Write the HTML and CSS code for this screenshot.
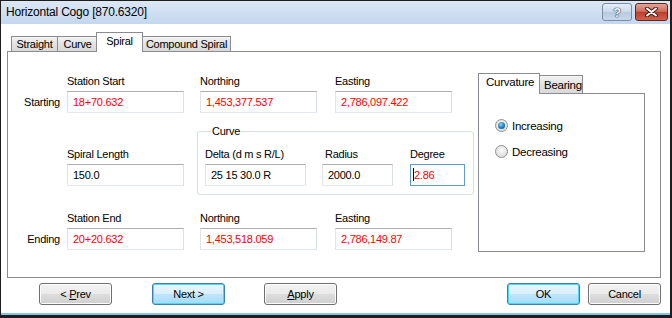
FILE: index.html
```html
<!DOCTYPE html>
<html lang="en">
<head>
    <meta charset="UTF-8">
    <title>Horizontal Cogo [870.6320]</title>
    <link rel="stylesheet" href="styles.css">
</head>
<body>

    <div class="window">
        <div class="titlebar">
            <span class="title">Horizontal Cogo [870.6320]</span>
            <div class="caption-buttons">
                <span class="cap-btn help">?</span>
                <span class="cap-btn close">
                    <svg width="15" height="10" viewBox="0 0 15 10">
                        <path d="M3 1.5 L12 8.5 M12 1.5 L3 8.5" stroke="#4a1c16" stroke-width="4" stroke-linecap="round"/>
                        <path d="M3 1.5 L12 8.5 M12 1.5 L3 8.5" stroke="#fff" stroke-width="2" stroke-linecap="round"/>
                    </svg>
                </span>
            </div>
        </div>

        <div class="client">
            <div class="tabs">
                <span class="tab">Straight</span>
                <span class="tab">Curve</span>
                <span class="tab active">Spiral</span>
                <span class="tab">Compound Spiral</span>
            </div>

            <div class="panel">
                <div class="left">
                    <div class="row row-start">
                        <span class="row-label">Starting</span>
                        <div class="field col-1">
                            <label>Station Start</label>
                            <div class="box red">18+70.632</div>
                        </div>
                        <div class="field col-2">
                            <label>Northing</label>
                            <div class="box red">1,453,377.537</div>
                        </div>
                        <div class="field col-3">
                            <label>Easting</label>
                            <div class="box red">2,786,097.422</div>
                        </div>
                    </div>

                    <div class="row row-mid">
                        <span class="row-label"></span>
                        <div class="field col-1 spiral-len">
                            <label>Spiral Length</label>
                            <div class="box">150.0</div>
                        </div>
                        <fieldset class="curve">
                            <legend>Curve</legend>
                            <div class="field delta">
                                <label>Delta (d m s R/L)</label>
                                <div class="box">25 15 30.0 R</div>
                            </div>
                            <div class="field radius">
                                <label>Radius</label>
                                <div class="box">2000.0</div>
                            </div>
                            <div class="field degree">
                                <label>Degree</label>
                                <div class="box focus red"><span class="caret"></span>2.86</div>
                            </div>
                        </fieldset>
                    </div>

                    <div class="row row-end">
                        <span class="row-label">Ending</span>
                        <div class="field col-1">
                            <label>Station End</label>
                            <div class="box red">20+20.632</div>
                        </div>
                        <div class="field col-2">
                            <label>Northing</label>
                            <div class="box red">1,453,518.059</div>
                        </div>
                        <div class="field col-3">
                            <label>Easting</label>
                            <div class="box red">2,786,149.87</div>
                        </div>
                    </div>
                </div>

                <div class="right">
                    <div class="subtabs">
                        <span class="subtab active">Curvature</span>
                        <span class="subtab">Bearing</span>
                    </div>
                    <div class="subpanel">
                        <div class="radio-row">
                            <span class="radio checked"></span>
                            <span>Increasing</span>
                        </div>
                        <div class="radio-row">
                            <span class="radio"></span>
                            <span>Decreasing</span>
                        </div>
                    </div>
                </div>
            </div>

            <div class="footer">
                <button class="btn prev">&lt; <u>P</u>rev</button>
                <button class="btn default next">Next &gt;</button>
                <button class="btn apply"><u>A</u>pply</button>
                <span class="spacer"></span>
                <button class="btn default ok">OK</button>
                <button class="btn cancel">Cancel</button>
            </div>
        </div>
    </div>

</body>
</html>
```

FILE: styles.css
```css
* {
    box-sizing: border-box;
}

body {
    margin: 0;
    font-family: 'Liberation Sans', Arial, sans-serif;
    font-size: 11px;
    letter-spacing: -0.25px;
    color: #000;
    background: #fff;
}

.window {
    width: 672px;
    height: 318px;
    border: 1px solid #1e1e1e;
    border-width: 1px 2px 3px 1px;
    display: flex;
    flex-direction: column;
    background: #fff;
}

/* title bar */
.titlebar {
    height: 23px;
    flex: none;
    display: flex;
    align-items: flex-start;
    justify-content: space-between;
    background: linear-gradient(to bottom, #dce7f5, #c4d7ee);
    padding-left: 5px;
}

.title {
    font-size: 12px;
    letter-spacing: -0.2px;
    line-height: 23px;
}

.caption-buttons {
    display: flex;
    gap: 3px;
    margin-top: 2px;
    margin-right: 2px;
}

.cap-btn {
    height: 18px;
    border-radius: 3px;
    display: flex;
    align-items: center;
    justify-content: center;
}

.help {
    width: 30px;
    border: 1px solid #7b8ca5;
    background: linear-gradient(to bottom, #e6eef8 0%, #cbd9ea 50%, #b7cadf 51%, #c9d8ea 100%);
    color: #f4f7fb;
    font-weight: bold;
    font-size: 13px;
    text-shadow: 0 0 1px #2c3e58, 0 0 1px #2c3e58, 0 0 1px #2c3e58;
}

.close {
    width: 33px;
    border: 1px solid #5c2a25;
    background: linear-gradient(to bottom, #e3a396 0%, #cd7062 45%, #bf3f2e 52%, #d0604e 100%);
}

/* client area */
.client {
    flex: 1;
    display: flex;
    flex-direction: column;
    padding: 8px 9px 0 6px;
    border-bottom: 2px solid #85c3ea;
}

.tabs {
    display: flex;
    align-items: flex-end;
    height: 19px;
    padding-left: 4px;
    position: relative;
    z-index: 1;
}

.tab {
    height: 15px;
    padding: 0;
    line-height: 14px;
    text-align: center;
    white-space: nowrap;
    border: 1px solid #898c95;
    border-bottom: none;
    margin-right: -1px;
    background: linear-gradient(to bottom, #f3f3f3, #e2e2e2 50%, #d9d9d9);
}

.tab:nth-child(1) { width: 47px; }
.tab:nth-child(2) { width: 41px; }
.tab:nth-child(4) { width: 89px; }

.tab.active {
    width: 47px;
    height: 20px;
    background: #fff;
    padding-top: 1px;
    margin-left: -1px;
    margin-right: -1px;
    margin-bottom: -1px;
    position: relative;
}

.panel {
    height: 227px;
    border: 1px solid #898c95;
    display: flex;
}

/* left form area */
.left {
    width: 470px;
    flex: none;
}

.row {
    display: flex;
    align-items: flex-end;
}

.row-label {
    width: 59px;
    flex: none;
    text-align: right;
    padding-right: 7px;
    line-height: 22px;
}

.field label {
    display: block;
    line-height: 13px;
    margin-bottom: 3px;
}

.box {
    height: 22px;
    line-height: 20px;
    padding-left: 5px;
    border: 1px solid;
    border-color: #abadb3 #dbdfe6 #e3e9ef #e2e3ea;
    white-space: nowrap;
}

.red {
    color: #f00;
}

.col-1 { width: 117px; margin-right: 16px; }
.col-2 { width: 117px; margin-right: 18px; }
.col-3 { width: 117px; }

.row-start {
    margin-top: 23px;
}

.row-mid {
    margin-top: 12px;
}

.spiral-len {
    margin-right: 13px;
    margin-bottom: 9px;
}

.curve {
    width: 277px;
    height: 70px;
    margin: 0;
    padding: 2px 0 0 7px;
    border: 1px solid #d5dfe5;
    border-radius: 3px;
    display: flex;
    align-items: flex-end;
}

.curve legend {
    padding: 0 1px;
    margin-left: 6px;
    line-height: 13px;
}

.curve .field {
    margin-bottom: 8px;
}

.delta { width: 101px; margin-right: 16px; }
.radius { width: 71px; margin-right: 17px; }
.radius label { padding-left: 3px; }
.degree { width: 55px; }

.box.focus {
    border: 1px solid #5f9ad0;
    padding-left: 2px;
}

.caret {
    display: inline-block;
    width: 1px;
    height: 13px;
    background: #000;
    vertical-align: -2px;
}

.row-end {
    margin-top: 17px;
}

/* right tab control */
.right {
    width: 167px;
    flex: none;
    margin-top: 21px;
}

.subtabs {
    display: flex;
    align-items: flex-end;
    height: 20px;
    position: relative;
    z-index: 1;
}

.subtab {
    height: 18px;
    border: 1px solid #898c95;
    border-bottom: none;
    padding: 0 0 0 4px;
    line-height: 18px;
    font-size: 11.5px;
    white-space: nowrap;
    background: linear-gradient(to bottom, #f3f3f3, #e2e2e2 50%, #d9d9d9);
}

.subtab.active {
    width: 62px;
    height: 21px;
    margin-bottom: -1px;
    padding: 0 0 0 7px;
    line-height: 16px;
    background: #fff;
}

.subtab:nth-child(2) {
    width: 44px;
    margin-left: -1px;
}

.subpanel {
    height: 159px;
    border: 1px solid #898c95;
    padding: 25px 0 0 16px;
}

.radio-row {
    display: flex;
    align-items: center;
    gap: 4px;
    height: 13px;
    margin-bottom: 13px;
    font-size: 11.5px;
}

.radio {
    width: 13px;
    height: 13px;
    border-radius: 50%;
    border: 1px solid #8f8f8f;
    background: radial-gradient(circle at 50% 40%, #fbfbfb, #d4d4d4);
    position: relative;
}

.radio.checked::after {
    content: '';
    position: absolute;
    left: 2px;
    top: 2px;
    width: 7px;
    height: 7px;
    border-radius: 50%;
    background: radial-gradient(circle at 40% 35%, #8fd3f7, #1a73ae 60%, #0c4f82);
}

/* buttons */
.footer {
    display: flex;
    align-items: center;
    height: 35px;
    padding-left: 32px;
    padding-bottom: 3px;
}

.btn {
    width: 73px;
    height: 22px;
    padding: 0;
    font-family: 'Liberation Sans', Arial, sans-serif;
    font-size: 11px;
    letter-spacing: -0.25px;
    color: #000;
    border: 1px solid #707070;
    border-radius: 3px;
    background: linear-gradient(to bottom, #f2f2f2 0%, #ebebeb 48%, #dddddd 52%, #cfcfcf 100%);
    box-shadow: inset 0 0 0 1px #fcfcfc;
}

.btn.default {
    border-color: #3c7fb1;
    background: linear-gradient(to bottom, #eaf6fd 0%, #d9f0fc 48%, #bee6fd 52%, #a7d9f5 100%);
    box-shadow: inset 0 0 0 1px #48d8f8;
}

.next { margin-left: 40px; }
.apply { margin-left: 39px; }
.spacer { flex: 1; }
.cancel { margin-left: 8px; }
```
